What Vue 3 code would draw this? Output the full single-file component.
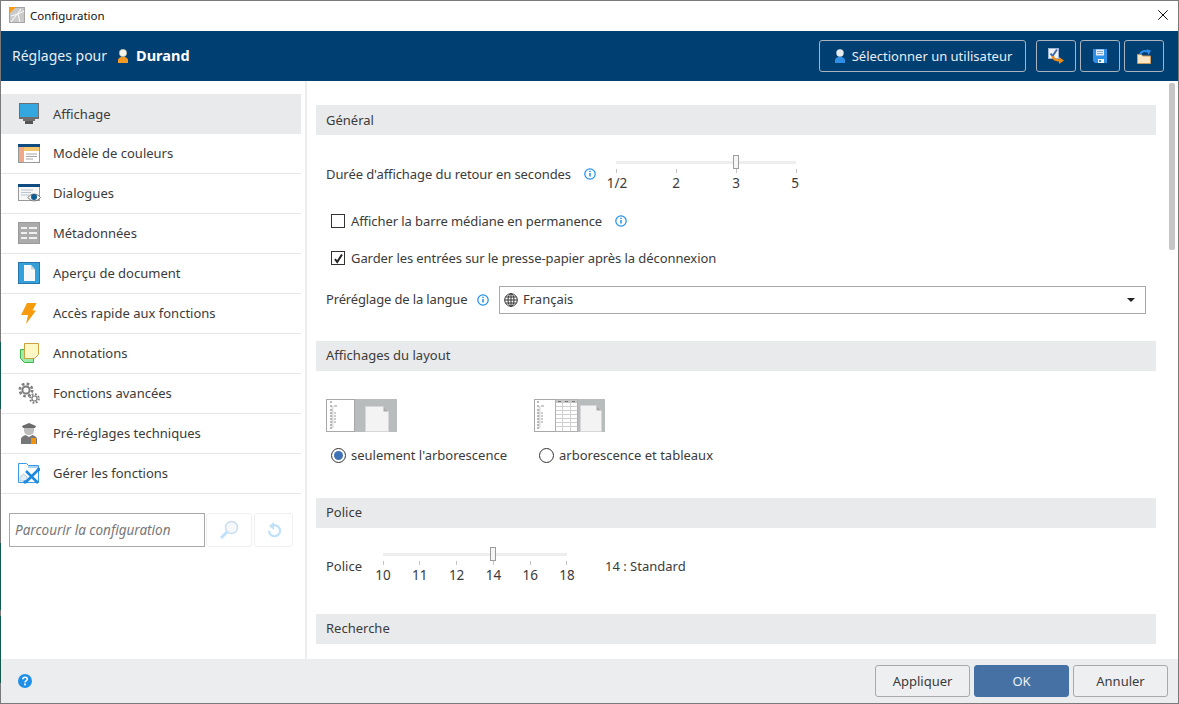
<script setup>
const navItems = [
  { label: 'Affichage', icon: 'monitor', active: true },
  { label: 'Modèle de couleurs', icon: 'colors' },
  { label: 'Dialogues', icon: 'dialog' },
  { label: 'Métadonnées', icon: 'meta' },
  { label: 'Aperçu de document', icon: 'doc' },
  { label: 'Accès rapide aux fonctions', icon: 'bolt' },
  { label: 'Annotations', icon: 'note' },
  { label: 'Fonctions avancées', icon: 'gears' },
  { label: 'Pré-réglages techniques', icon: 'tech' },
  { label: 'Gérer les fonctions', icon: 'tools' }
]
const timeMarks = ['1/2', '2', '3', '5']
const fontMarks = ['10', '11', '12', '14', '16', '18']
const treeDots = [3, 7, 11, 14, 17, 20, 23, 26, 29]
</script>

<template>
  <div class="window">
    <div class="titlebar">
      <svg class="app-icon" width="16" height="16" viewBox="0 0 16 16">
        <rect x="0.500" y="0.500" width="15" height="15" fill="#c9c9c9" stroke="#a5a5a5" />
        <path d="M0 0h7L0 7z" fill="#f39c12" />
        <path d="M2 15L12 2M9 7l6-3M9 7l2 8M9 7L2 9" stroke="#f7f7f7" stroke-width="1.100" fill="none" />
      </svg>
      <span class="title">Configuration</span>
      <svg class="close" width="10" height="10" viewBox="0 0 10 10">
        <path d="M.3.3l9.400 9.400M9.700.3L.3 9.700" stroke="#111" stroke-width="1" fill="none" />
      </svg>
    </div>

    <header class="header">
      <span class="for">Réglages pour</span>
      <svg class="user" width="10" height="14" viewBox="0 0 10 14">
        <circle cx="5" cy="4" r="3.700" fill="#f7f4ea" stroke="#b8b0a0" stroke-width=".5" />
        <path d="M0 14v-3c0-1.500 1.500-2.500 3-3h4c1.500.5 3 1.500 3 3v3z" fill="#f39a25" />
      </svg>
      <strong class="name">Durand</strong>
      <span class="spacer"></span>
      <button class="hbtn select-user">
        <svg width="10" height="14" viewBox="0 0 10 14">
          <circle cx="5" cy="4" r="3.700" fill="#e8ecef" />
          <path d="M0 14v-3c0-1.500 1.500-2.500 3-3h4c1.500.5 3 1.500 3 3v3z" fill="#2f8fe6" />
        </svg>
        <span>Sélectionner un utilisateur</span>
      </button>
      <button class="hbtn square">
        <svg width="16" height="16" viewBox="0 0 16 16">
          <rect x="0.500" y="0.500" width="10" height="10" fill="#eef1f6" stroke="#9db4d6" />
          <path d="M2.500 5.500l2 2.500L9 1.500" stroke="#3f6cab" stroke-width="2" fill="none" />
          <path d="M5 8c0 3.500 3 4.500 7 4.500" stroke="#f08a12" stroke-width="2.400" fill="none" />
          <path d="M11 9l5 3.500-5 3.500z" fill="#f08a12" />
        </svg>
      </button>
      <button class="hbtn square">
        <svg width="14" height="14" viewBox="0 0 14 14">
          <path d="M0 0h14v14H2l-2-2z" fill="#2f8fe6" />
          <rect x="3" y="0.500" width="8" height="6" fill="#e8eef5" />
          <path d="M4 2.500h6M4 4.500h6" stroke="#8aa9c8" />
          <rect x="5" y="10" width="6" height="4" fill="#f2f5f8" />
          <rect x="6" y="11" width="2" height="2" fill="#2f8fe6" />
        </svg>
      </button>
      <button class="hbtn square">
        <svg width="14" height="15" viewBox="0 0 14 15">
          <path d="M.5 14.500v-9h4l1 1.500h8v7.500z" fill="#fbe6c4" stroke="#c99a5c" />
          <path d="M3 5.500C4 2 8 1 11 3" stroke="#2f8fe6" stroke-width="2" fill="none" />
          <path d="M9.500 0.300l4.500 1.200L11.500 6z" fill="#2f8fe6" />
        </svg>
      </button>
    </header>

    <div class="body">
      <aside class="sidebar">
        <nav class="nav">
          <div v-for="item in navItems" :key="item.label" class="nav-item" :class="{ active: item.active }">
            <span class="nav-icon">
              <svg v-if="item.icon === 'monitor'" width="20" height="21" viewBox="0 0 20 21">
                <rect width="20" height="16" fill="#6e6e6e" />
                <rect x="1" y="1" width="18" height="13" fill="#34a6e0" />
                <rect x="4" y="16" width="12" height="2" fill="#6e6e6e" />
                <rect x="6" y="18" width="8" height="3" fill="#555" />
              </svg>
              <svg v-else-if="item.icon === 'colors'" width="22" height="19" viewBox="0 0 22 19">
                <rect x="0.500" y="0.500" width="21" height="18" fill="#fff" stroke="#999" />
                <rect width="22" height="3" fill="#0f4a80" />
                <rect x="1" y="3" width="5" height="15" fill="#f0a988" />
                <rect x="6" y="3" width="15" height="4" fill="#f6c66f" />
                <path d="M8 10h11M8 12.500h11M8 15h7" stroke="#a5a5a5" />
              </svg>
              <svg v-else-if="item.icon === 'dialog'" width="23" height="18" viewBox="0 0 23 18">
                <rect x="0.500" y="0.500" width="21" height="16" fill="#f6f6f6" stroke="#999" />
                <rect width="22" height="3" fill="#0f4a80" />
                <path d="M3 6h12M3 8.500h10M3 11h8" stroke="#b8c4d0" />
                <path d="M10 13.500c3-4.500 9-4.500 12.500 0-3.500 4.500-9.500 4.500-12.500 0z" fill="#fff" stroke="#6e6e6e" />
                <circle cx="16" cy="13" r="3" fill="#0f5a94" />
              </svg>
              <svg v-else-if="item.icon === 'meta'" width="22" height="22" viewBox="0 0 22 22">
                <rect x="0.500" y="0.500" width="21" height="21" fill="#ababab" stroke="#999" />
                <path d="M3 6h6M11 6h8M3 11h6M11 11h8M3 16h6M11 16h8" stroke="#f0f0f0" stroke-width="1.800" />
              </svg>
              <svg v-else-if="item.icon === 'doc'" width="22" height="22" viewBox="0 0 22 22">
                <rect x="0.500" y="0.500" width="21" height="21" fill="#34a0da" stroke="#2a76ab" />
                <path d="M6 3h7l4 4.500V19H6z" fill="#f8f8f8" />
                <path d="M13 3l4 4.500h-4z" fill="#cfd6db" />
              </svg>
              <svg v-else-if="item.icon === 'bolt'" width="16" height="21" viewBox="0 0 16 21">
                <path d="M6 0h9.500l-4 7.500H15L5 21l2-9H0z" fill="#f59b0d" />
              </svg>
              <svg v-else-if="item.icon === 'note'" width="19" height="20" viewBox="0 0 19 20">
                <path d="M.500 6.500h13v13h-9l-4-4z" fill="#9ceaa9" stroke="#3fb54e" />
                <path d="M4.500.500h14v11l-4 4h-10z" fill="#fff8c4" stroke="#c9a23e" />
              </svg>
              <svg v-else-if="item.icon === 'gears'" width="22" height="22" viewBox="0 0 22 22">
                <circle cx="8" cy="8" r="6.200" fill="none" stroke="#7d7d7d" stroke-width="2.600" stroke-dasharray="2.600 2.260" />
                <circle cx="8" cy="8" r="3.600" fill="#fff" stroke="#7d7d7d" stroke-width="2" />
                <circle cx="16.500" cy="16.500" r="4.300" fill="none" stroke="#7d7d7d" stroke-width="2" stroke-dasharray="1.800 1.580" />
                <circle cx="16.500" cy="16.500" r="2.500" fill="#fff" stroke="#7d7d7d" stroke-width="1.200" />
              </svg>
              <svg v-else-if="item.icon === 'tech'" width="16" height="21" viewBox="0 0 16 21">
                <path d="M1 3l7-3 7 3-1 2H2z" fill="#6b6b6b" />
                <path d="M3 5h10v3c0 2-2 4-5 4S3 10 3 8z" fill="#bdbdbd" />
                <path d="M0 21v-5c0-2 2-3 4.500-4L8 14l3.500-2c2.500 1 4.500 2 4.500 4v5z" fill="#777" />
                <rect x="10" y="15" width="5" height="6" fill="#f39312" />
              </svg>
              <svg v-else width="22" height="21" viewBox="0 0 22 21">
                <path d="M.500 19.500V.500h8l2 2h10v17z" fill="#fff" stroke="#3a9ae8" />
                <path d="M10 3h10v2H10z" fill="#a9d2f5" />
                <path d="M2 14l3.500-3 3.500 3v4H2z" fill="#e3edf4" stroke="#a8c2d6" stroke-width=".8" />
                <path d="M8 8l12 12M20 7L8 19" stroke="#1f88e0" stroke-width="2.600" />
                <circle cx="20.500" cy="6.500" r="1.800" fill="#1f88e0" />
                <circle cx="7" cy="19" r="1.700" fill="#1f88e0" />
              </svg>
            </span>
            <span class="nav-label">{{ item.label }}</span>
          </div>
        </nav>

        <div class="search">
          <div class="search-input">Parcourir la configuration</div>
          <button class="search-btn wide">
            <svg width="20" height="20" viewBox="0 0 20 20">
              <circle cx="12.500" cy="7.500" r="6" fill="#f5f7f9" stroke="#c9ddee" stroke-width="1.500" />
              <path d="M8 12l-6 6" stroke="#bfe0fa" stroke-width="3" />
            </svg>
          </button>
          <button class="search-btn">
            <svg width="14" height="16" viewBox="0 0 14 16">
              <path d="M4 4.500a5.500 5.500 0 1 1-2 4.300" fill="none" stroke="#bfe0fa" stroke-width="2.200" />
              <path d="M7 0v8L2 4z" fill="#bfe0fa" />
            </svg>
          </button>
        </div>
      </aside>

      <main class="content">
        <section>
          <h2 class="sec-head">Général</h2>
          <div class="row-time">
            <span class="lbl tight">Durée d'affichage du retour en secondes</span>
            <svg class="info info-a" width="12" height="12" viewBox="0 0 12 12">
              <circle cx="6" cy="6" r="5.200" fill="none" stroke="#1f8fe8" stroke-width="1.200" />
              <path d="M6 5v3.500M6 2.800v1.200" stroke="#1f8fe8" stroke-width="1.500" />
            </svg>
            <div class="slider slider-time">
              <div class="track"></div>
              <div class="thumb thumb-time"></div>
              <div class="marks">
                <div v-for="m in timeMarks" :key="m" class="mark"><i></i><b>{{ m }}</b></div>
              </div>
            </div>
          </div>
          <div class="check-row first">
            <span class="box"></span>
            <span class="lbl tight">Afficher la barre médiane en permanence</span>
            <svg class="info info-b" width="12" height="12" viewBox="0 0 12 12">
              <circle cx="6" cy="6" r="5.200" fill="none" stroke="#1f8fe8" stroke-width="1.200" />
              <path d="M6 5v3.500M6 2.800v1.200" stroke="#1f8fe8" stroke-width="1.500" />
            </svg>
          </div>
          <div class="check-row second">
            <span class="box">
              <svg width="11" height="11" viewBox="0 0 11 11">
                <path d="M2 6l2.200 3L9 1.500" fill="none" stroke="#222" stroke-width="2" />
              </svg>
            </span>
            <span class="lbl tight">Garder les entrées sur le presse-papier après la déconnexion</span>
          </div>
          <div class="lang-row">
            <span class="lbl lang-lbl">Préréglage de la langue</span>
            <svg class="info info-c" width="12" height="12" viewBox="0 0 12 12">
              <circle cx="6" cy="6" r="5.200" fill="none" stroke="#1f8fe8" stroke-width="1.200" />
              <path d="M6 5v3.500M6 2.800v1.200" stroke="#1f8fe8" stroke-width="1.500" />
            </svg>
            <div class="select">
              <svg width="14" height="14" viewBox="0 0 14 14" fill="none" stroke="#333" stroke-width="1">
                <circle cx="7" cy="7" r="6.300" />
                <ellipse cx="7" cy="7" rx="3" ry="6.300" />
                <path d="M7 .7v12.600M.7 7h12.600M1.500 4h11M1.500 10h11" />
              </svg>
              <span class="lbl lang-value">Français</span>
              <span class="caret"></span>
            </div>
          </div>
        </section>

        <section class="sec-layout">
          <h2 class="sec-head">Affichages du layout</h2>
          <div class="layouts">
            <div class="layout-opt opt-a">
              <svg width="71" height="33" viewBox="0 0 71 33">
                <rect width="71" height="33" fill="#b9bcbc" />
                <rect x="0.500" y="0.500" width="28" height="32" fill="#fff" stroke="#a8a8a8" />
                <path d="M6.500 7v22" stroke="#dcdcdc" stroke-width="2" />
                <path v-for="d in treeDots" :key="d" :d="`M4 ${d}h2`" stroke="#777" stroke-width="1" />
                <path d="M8 7h3M8 14h2M8 17h2M8 20h2M8 23h2" stroke="#999" />
                <path d="M39.500 7.500h18l5 5v20h-23z" fill="#f3f3f3" stroke="#d6d6d6" />
                <path d="M57.500 7.500v5h5z" fill="#a9a9a9" />
              </svg>
              <div class="radio-row">
                <span class="radio on"><i></i></span>
                <span class="lbl">seulement l'arborescence</span>
              </div>
            </div>
            <div class="layout-opt opt-b">
              <svg width="71" height="33" viewBox="0 0 71 33">
                <rect width="71" height="33" fill="#b9bcbc" />
                <rect x="0.500" y="0.500" width="21" height="32" fill="#fff" stroke="#a8a8a8" />
                <path d="M5.500 7v22" stroke="#dcdcdc" stroke-width="2" />
                <path v-for="d in treeDots" :key="d" :d="`M3 ${d}h2`" stroke="#777" stroke-width="1" />
                <path d="M7 7h3M7 14h2M7 17h2M7 20h2M7 23h2" stroke="#999" />
                <rect x="21.500" y="0.500" width="22" height="32" fill="#fff" stroke="#b0b0b0" />
                <rect x="22" y="1" width="21" height="3" fill="#c8c8c8" />
                <path d="M24 2.500h3M31 2.500h3M38 2.500h3" stroke="#777" />
                <path d="M22 7.500h21M22 11.500h21M22 15.500h21M22 19.500h21M22 23.500h21M22 27.500h21M28.500 4v28M36.500 4v28" stroke="#cfcfcf" />
                <path d="M46.500 6.500h16l5 5v21h-21z" fill="#f3f3f3" stroke="#d6d6d6" />
                <path d="M62.500 6.500v5h5z" fill="#a9a9a9" />
              </svg>
              <div class="radio-row">
                <span class="radio"></span>
                <span class="lbl">arborescence et tableaux</span>
              </div>
            </div>
          </div>
        </section>

        <section class="sec-font">
          <h2 class="sec-head">Police</h2>
          <div class="row-font">
            <span class="lbl police">Police</span>
            <div class="slider slider-font">
              <div class="track"></div>
              <div class="thumb thumb-font"></div>
              <div class="marks">
                <div v-for="m in fontMarks" :key="m" class="mark"><i></i><b>{{ m }}</b></div>
              </div>
            </div>
            <span class="lbl font-value">14 : Standard</span>
          </div>
        </section>

        <section class="sec-search">
          <h2 class="sec-head">Recherche</h2>
        </section>
      </main>

      <div class="scroll"><div class="scroll-thumb"></div></div>
    </div>

    <footer class="footer">
      <svg class="help" width="14" height="14" viewBox="0 0 14 14">
        <circle cx="7" cy="7" r="7" fill="#1f8fe8" />
        <path d="M4.800 5.300C4.900 3.800 6 3.200 7.100 3.200c1.300 0 2.200.8 2.200 1.900 0 1.800-2.300 1.700-2.300 3.300" fill="none" stroke="#fff" stroke-width="1.600" />
        <rect x="6.100" y="9.500" width="1.800" height="1.800" fill="#fff" />
      </svg>
      <span class="spacer"></span>
      <button class="fbtn">Appliquer</button>
      <button class="fbtn primary">OK</button>
      <button class="fbtn">Annuler</button>
    </footer>
  </div>
</template>

<style>
html, body { margin: 0; padding: 0; background: #fff; overflow: hidden; }
</style>

<style scoped>
* { box-sizing: border-box; }
.window {
  width: 1179px;
  height: 704px;
  display: flex;
  flex-direction: column;
  font-family: "Noto Sans", "Open Sans", sans-serif;
  font-size: 13px;
  color: #3b3b3b;
  background: #fff;
  border: 1px solid #7a7a7a;
  border-left-width: 0;
  position: relative;
  overflow: hidden;
}
.window::before {
  content: "";
  position: absolute;
  left: 0;
  top: 0;
  bottom: 0;
  width: 1px;
  z-index: 5;
  background: linear-gradient(to bottom,
    #7a7a7a 0, #7a7a7a 341px,
    #14594f 341px, #14594f 408px,
    #7a7a7a 408px, #7a7a7a 542px,
    #14594f 542px, #14594f 609px,
    #7a7a7a 609px, #7a7a7a 615px,
    #14594f 615px, #14594f 682px,
    #7a7a7a 682px);
}
.titlebar {
  height: 30px;
  flex: none;
  display: flex;
  align-items: center;
  padding-left: 9px;
  padding-bottom: 2px;
  color: #111;
}
.title { margin-left: 5px; font-size: 11.500px; }
.close { margin-left: auto; margin-right: 10px; }
.header {
  height: 50px;
  flex: none;
  display: flex;
  align-items: center;
  background: #003f72;
  color: #fff;
  padding-left: 12px;
  padding-right: 14px;
}
.for { font-size: 14px; color: #e8eef4; margin-bottom: 2px; }
.user { margin-left: 11px; }
.name { margin-left: 8px; font-size: 14.500px; font-weight: 700; margin-bottom: 2px; }
.spacer { flex: 1; }
.hbtn {
  height: 32px;
  background: transparent;
  border: 1px solid #a9b4be;
  border-radius: 3px;
  display: flex;
  align-items: center;
  justify-content: center;
  padding: 0;
  color: #e8eef4;
  font: inherit;
  font-size: 13px;
}
.select-user { width: 207px; gap: 7px; padding-left: 2px; }
.square { width: 40px; margin-left: 4px; }
.select-user + .square { margin-left: 10px; }
.body { flex: 1; min-height: 0; display: flex; overflow: hidden; }
.sidebar {
  width: 307px;
  flex: none;
  border-right: 2px solid #ecedef;
  padding: 13px 4px 0 1px;
}
.nav-item {
  height: 40px;
  display: flex;
  align-items: center;
  border-bottom: 1px solid #e6e7e9;
  padding-bottom: 1px;
}
.nav-item.active { background: #e9eaec; border-bottom-color: transparent; padding-bottom: 0; }
.nav-icon { width: 52px; flex: none; display: flex; justify-content: center; padding-left: 4px; }
.nav-label { font-size: 13px; }
.search { display: flex; align-items: stretch; height: 34px; margin-top: 19px; margin-left: 8px; }
.search-input {
  width: 196px;
  border: 1px solid #a9a9a9;
  display: flex;
  align-items: center;
  padding-left: 5px;
  font-style: italic;
  color: #777;
  font-size: 13.500px;
  white-space: nowrap;
}
.search-btn {
  width: 39px;
  padding: 0;
  margin-left: 2px;
  background: #fff;
  border: 1px solid #eeeff1;
  border-radius: 3px;
  display: flex;
  align-items: center;
  justify-content: center;
}
.search-btn.wide { width: 46px; margin-left: 1px; }
.content { flex: 1; min-width: 0; padding: 24px 0 0 9px; overflow: hidden; }
.sec-head {
  height: 30px;
  margin: 0;
  background: #e9eaec;
  padding-left: 10px;
  font-size: 13px;
  font-weight: 400;
  line-height: 30px;
  color: #3b3b3b;
}
section + section .sec-head { line-height: 29px; }
.lbl { white-space: nowrap; }
.tight { letter-spacing: -0.080px; }
.row-time { display: flex; align-items: flex-start; height: 66px; margin-left: 10px; padding-top: 29px; }
.row-time .lbl { line-height: 20px; }
.info { flex: none; }
.info-a { margin: 4px 0 0 13px; }
.info-b { margin-left: 13px; }
.info-c { margin-left: 10px; }
.slider { position: relative; height: 46px; }
.slider-time { width: 180px; margin: -9px 0 0 20px; }
.track { position: absolute; left: 0; right: 0; top: 6px; height: 3px; background: #eeeeee; }
.thumb {
  position: absolute;
  top: 0;
  width: 6px;
  height: 14px;
  background: #f6f6f6;
  border: 1px solid #9c9c9c;
}
.thumb-time { left: 117px; }
.thumb-font { left: 107px; }
.marks { position: absolute; left: 0; right: 0; top: 14px; display: flex; justify-content: space-between; }
.mark { width: 0; display: flex; flex-direction: column; align-items: center; }
.mark i { display: block; width: 1px; height: 4px; background: #c4c4c4; flex: none; }
.mark b { font-weight: 400; font-size: 13.500px; line-height: 20px; white-space: nowrap; color: #3b3b3b; }
.slider-time .mark:first-child b { margin-left: 2px; }
.slider-time .mark:last-child b { margin-left: -2px; }
.check-row { display: flex; align-items: center; height: 20px; margin-left: 15px; }
.check-row.first { margin-top: 10px; }
.check-row.second { margin-top: 17px; }
.box {
  width: 14px;
  height: 14px;
  border: 1px solid #333;
  margin-right: 6px;
  background: #fff;
  display: flex;
  align-items: center;
  justify-content: center;
  flex: none;
}
.lang-row { display: flex; align-items: center; height: 28px; margin-top: 18px; margin-left: 10px; }
.lang-lbl { width: 141px; letter-spacing: -0.150px; margin-bottom: 2px; }
.lang-value { margin-bottom: 2px; }
.select {
  width: 647px;
  height: 28px;
  margin-left: 10px;
  border: 1px solid #a9a9a9;
  display: flex;
  align-items: center;
  padding-left: 4px;
  gap: 5px;
}
.caret {
  margin-left: auto;
  margin-right: 10px;
  width: 0;
  height: 0;
  border-left: 4.500px solid transparent;
  border-right: 4.500px solid transparent;
  border-top: 4px solid #222;
}
.sec-layout { margin-top: 27px; }
.layouts { display: flex; margin-left: 10px; padding-top: 28px; }
.layout-opt svg { display: block; }
.opt-a { width: 208px; }
.radio-row { display: flex; align-items: center; height: 20px; margin-top: 13px; margin-left: 5px; }
.radio {
  width: 15px;
  height: 15px;
  border: 1px solid #333;
  border-radius: 50%;
  margin-right: 5px;
  display: flex;
  align-items: center;
  justify-content: center;
  flex: none;
}
.radio i { display: block; width: 9px; height: 9px; border-radius: 50%; background: #3f73b5; }
.sec-font { margin-top: 33px; }
.row-font { display: flex; align-items: flex-start; margin-left: 10px; padding-top: 19px; height: 56px; }
.police { line-height: 20px; margin-top: 9px; width: 39px; }
.slider-font { width: 184px; margin-left: 18px; }
.font-value { line-height: 20px; margin-top: 9px; margin-left: 38px; }
.sec-search { margin-top: 30px; }
.scroll { width: 10px; margin-left: 12px; flex: none; padding: 2px 0 0 1px; }
.scroll-thumb { width: 6px; height: 167px; background: #c6c6c6; border-radius: 2px; }
.footer {
  height: 44px;
  flex: none;
  background: #ecedef;
  display: flex;
  align-items: center;
  padding: 0 10px 0 18px;
}
.help { margin-bottom: 1px; }
.fbtn {
  width: 95px;
  height: 32px;
  margin-left: 4px;
  border: 1px solid #a9a9a9;
  border-radius: 3px;
  background: #eeeff1;
  color: #3b3b3b;
  font: inherit;
  font-size: 13px;
  padding: 0;
}
.fbtn.primary { background: #4671a5; border-color: #4671a5; color: #eef2f7; }
</style>
